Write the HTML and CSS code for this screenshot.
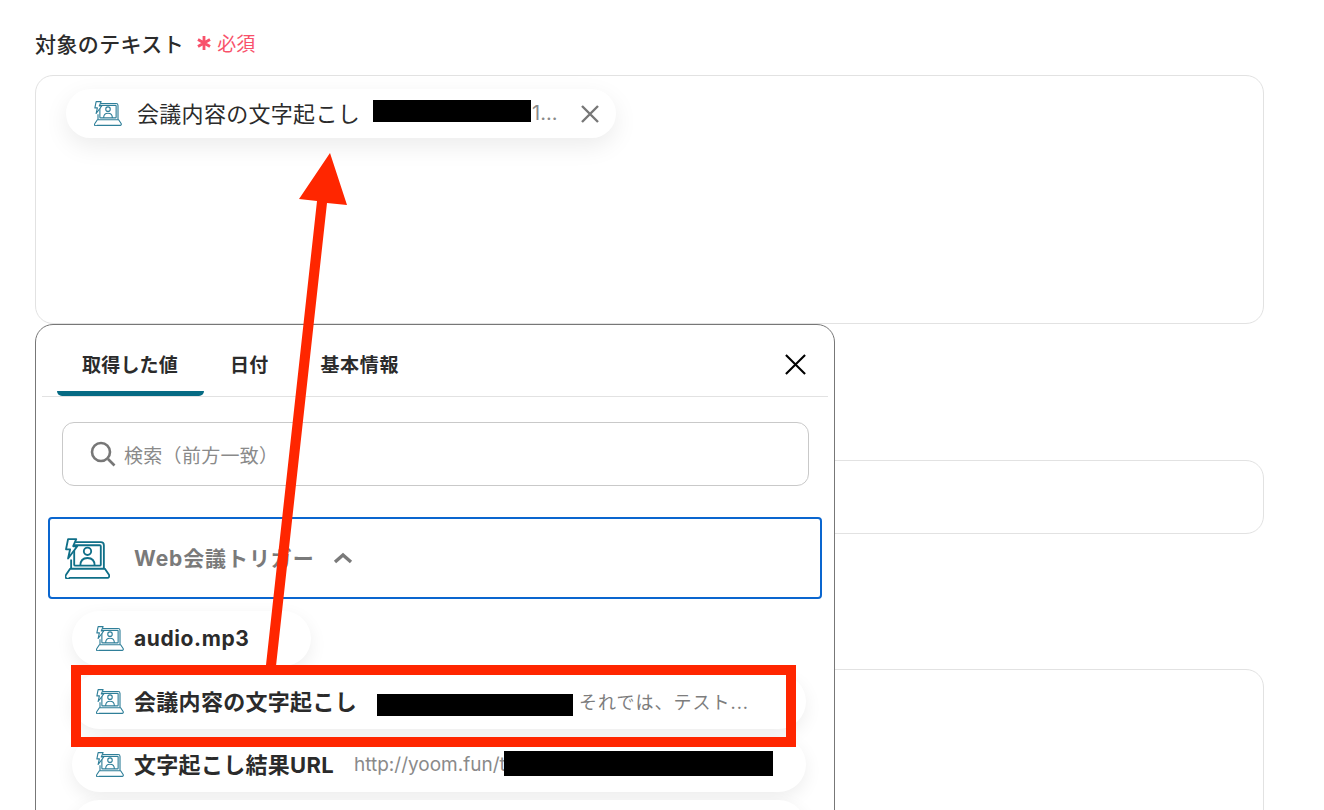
FILE: index.html
```html
<!DOCTYPE html>
<html lang="ja">

<head>
    <meta charset="UTF-8">
    <title>対象のテキスト</title>
    <link rel="stylesheet" href="styles.css">
</head>

<body>
    <svg class="defs" width="0" height="0">
        <symbol id="meet-icon" viewBox="0 0 44 40">
            <path d="M10 4h25a3 3 0 0 1 3 3v23M6 30V21" fill="none" stroke="currentColor" stroke-width="1.8" />
            <rect x="9" y="7" width="26" height="20" rx="1" fill="none" stroke="currentColor" stroke-width="1.8" />
            <path d="M3 1h8L8 8h4L3 20l2-9H1z" fill="#fff" stroke="currentColor" stroke-width="1.8" stroke-linejoin="round" />
            <circle cx="22" cy="13" r="3.6" fill="none" stroke="currentColor" stroke-width="1.8" />
            <path d="M15 27c0-5 3-7.500 7-7.500s7 2.500 7 7.500" fill="none" stroke="currentColor" stroke-width="1.8" />
            <path d="M5 30h34l4 6a2 2 0 0 1-1.500 3h-37A2 2 0 0 1 1 36z" fill="none" stroke="currentColor" stroke-width="1.8" stroke-linejoin="round" />
        </symbol>
    </svg>

    <div class="page">
        <div class="label">
            <span>対象のテキスト</span>
            <span class="required">
                <svg class="star" viewBox="0 0 16 16"><path d="M8 1v14M2 4.500l12 7M14 4.500l-12 7" /></svg>
                必須
            </span>
        </div>

        <div class="box box-main">
            <div class="tag">
                <svg class="icon"><use href="#meet-icon" /></svg>
                <span class="tag-name">会議内容の文字起こし</span>
                <span class="mask mask-tag"></span>
                <span class="tag-value">1...</span>
                <svg class="tag-close" viewBox="0 0 20 20"><path d="M2 2l16 16M18 2L2 18" /></svg>
            </div>
        </div>
        <div class="box box-second"></div>
        <div class="box box-third"></div>

        <div class="popup">
            <div class="tabs">
                <div class="tab active">取得した値</div>
                <div class="tab">日付</div>
                <div class="tab">基本情報</div>
                <svg class="popup-close" viewBox="0 0 24 24"><path d="M2 2l20 20M22 2L2 22" /></svg>
            </div>

            <div class="search">
                <svg viewBox="0 0 26 26"><circle cx="11" cy="11" r="9" /><path d="M18 18l6.500 6.500" /></svg>
                <span>検索（前方一致）</span>
            </div>

            <div class="group">
                <svg class="group-icon"><use href="#meet-icon" /></svg>
                <span class="group-name">Web会議トリガー</span>
                <svg class="chevron" viewBox="0 0 20 12"><path d="M2 10l8-7 8 7" /></svg>
            </div>

            <div class="chips">
                <div class="chip chip-short">
                    <svg class="icon"><use href="#meet-icon" /></svg>
                    <span class="chip-name">audio.mp3</span>
                </div>
                <div class="chip">
                    <svg class="icon"><use href="#meet-icon" /></svg>
                    <span class="chip-name">会議内容の文字起こし</span>
                    <span class="mask mask-chip"></span>
                    <span class="chip-value">それでは、テスト...</span>
                </div>
                <div class="chip">
                    <svg class="icon"><use href="#meet-icon" /></svg>
                    <span class="chip-name">文字起こし結果URL</span>
                    <span class="chip-url">http://yoom.fun/t</span>
                    <span class="mask mask-url"></span>
                </div>
                <div class="chip"></div>
            </div>
        </div>

        <svg class="marks" width="1324" height="810" viewBox="0 0 1324 810">
            <rect x="76" y="670" width="715" height="72" />
            <path class="arrow" d="M330 153L347 205 327 203 276 666 266 665 317 201 299 199z" />
        </svg>
    </div>
</body>

</html>
```

FILE: styles.css
```css
* {
    box-sizing: border-box;
}

html,
body {
    height: 100%;
    margin: 0;
    overflow: hidden;
}

body {
    font-family: Inter, "Noto Sans CJK JP", sans-serif;
    background: #fff;
    color: #2b2b2b;
}

.defs {
    position: absolute;
}

.page {
    position: relative;
    width: 1324px;
    height: 810px;
    padding: 30px 60px 0 35px;
    overflow: hidden;
}

.label {
    display: flex;
    align-items: center;
    gap: 12px;
    height: 28px;
    font-size: 21px;
    font-weight: 500;
    letter-spacing: 0.4px;
}

.label > span {
    margin-bottom: 3px;
}

.required {
    display: flex;
    align-items: center;
    gap: 5px;
    font-size: 19px;
    font-weight: 400;
    letter-spacing: 0;
    color: #f8516a;
}

.star {
    width: 16px;
    height: 16px;
    fill: none;
    stroke: #f8516a;
    stroke-width: 2.8;
}

.box {
    border: 1px solid #e2e2e2;
    border-radius: 18px;
    background: #fff;
}

.box-main {
    height: 249px;
    margin-top: 17px;
    padding: 13px 30px;
}

.box-second {
    height: 74px;
    margin-top: 136px;
}

.box-third {
    height: 300px;
    margin-top: 135px;
}

.tag {
    display: flex;
    align-items: center;
    width: 550px;
    height: 49px;
    padding: 0 16px 0 28px;
    border-radius: 25px;
    background: #fff;
    box-shadow: 0 8px 24px rgba(0, 0, 0, 0.08);
}

.icon {
    flex: none;
    width: 28px;
    height: 25px;
    color: #2f7f99;
}

.tag-name {
    margin: 0 0 4px 15px;
    font-size: 22px;
    letter-spacing: 0.3px;
    white-space: nowrap;
}

.mask {
    flex: none;
    display: block;
    background: #000;
}

.mask-tag {
    width: 158px;
    height: 22px;
    margin: 0 0 5px 13px;
}

.tag-value {
    margin: 0 0 2px 1px;
    font-size: 20px;
    color: #8a8a8a;
}

.tag-close {
    width: 20px;
    height: 20px;
    margin-left: auto;
    fill: none;
    stroke: #777;
    stroke-width: 2.4;
}

.popup {
    position: absolute;
    left: 35px;
    top: 324px;
    width: 800px;
    height: 520px;
    padding: 0 6px;
    border: 1px solid #777;
    border-radius: 18px;
    background: #fff;
}

.tabs {
    display: flex;
    align-items: flex-end;
    gap: 26px;
    height: 72px;
    border-bottom: 1px solid #e2e2e2;
    padding-left: 15px;
}

.tab {
    height: 70px;
    padding-top: 24px;
    font-size: 19px;
    font-weight: 700;
    letter-spacing: 0.2px;
    white-space: nowrap;
}

.tab:nth-child(3) {
    margin-left: 26px;
    letter-spacing: 0.7px;
}

.tab.active {
    border-bottom: 5px solid #066b84;
    border-radius: 0 0 5px 5px / 0 0 5px 5px;
    width: 147px;
    padding-left: 25px;
}

.popup-close {
    position: absolute;
    right: 27px;
    top: 28px;
    width: 23px;
    height: 23px;
    fill: none;
    stroke: #000;
    stroke-width: 2.2;
}

.search {
    display: flex;
    align-items: center;
    gap: 8px;
    height: 64px;
    margin: 25px 19px 0 20px;
    padding-left: 27px;
    border: 1px solid #c9c9c9;
    border-radius: 12px;
    font-size: 19px;
    letter-spacing: 0.3px;
    color: #8a8a8a;
}

.search span {
    margin-bottom: 0;
}

.search svg {
    width: 26px;
    height: 26px;
    fill: none;
    stroke: #777;
    stroke-width: 2.6;
}

.group {
    display: flex;
    align-items: center;
    height: 82px;
    margin: 31px 6px 0;
    padding-left: 15px;
    border: 2px solid #0a66cf;
    border-radius: 4px;
}

.group-icon {
    width: 45px;
    height: 41px;
    color: #0f6f88;
}

.group-name {
    margin: 0 0 2px 24px;
    font-size: 21px;
    font-weight: 700;
    letter-spacing: 0.9px;
    color: #7a7a7a;
}

.chevron {
    width: 20px;
    height: 12px;
    margin-left: 18px;
    fill: none;
    stroke: #7a7a7a;
    stroke-width: 3.4;
}

.chips {
    display: flex;
    flex-direction: column;
    gap: 8px;
    margin: 12px 22px 0 30px;
}

.chip {
    display: flex;
    align-items: center;
    flex: none;
    height: 55px;
    padding-left: 24px;
    border-radius: 28px;
    background: #fff;
    box-shadow: 0 6px 18px rgba(0, 0, 0, 0.07);
}

.chip-short {
    width: 239px;
}

.chip-name {
    margin: 0 0 4px 10px;
    font-size: 22px;
    font-weight: 700;
    letter-spacing: 0.3px;
    white-space: nowrap;
}

.chip-short .chip-name {
    margin-bottom: 0;
    font-size: 21px;
    letter-spacing: 0.6px;
}

.mask-chip {
    width: 196px;
    height: 22px;
    margin: 7px 0 0 20px;
}

.chip-value {
    margin: 0 0 2px 6px;
    font-size: 18px;
    letter-spacing: 1px;
    color: #7d7d7d;
}

.chip-url {
    margin: 0 -2px 0 20px;
    font-size: 19px;
    color: #8a8a8a;
    white-space: nowrap;
}

.mask-url {
    width: 269px;
    height: 25px;
    margin-bottom: 2px;
}

/* annotations drawn on top of the screenshot */
.marks {
    position: absolute;
    left: 0;
    top: 0;
    fill: none;
    stroke: #ff2600;
    stroke-width: 10;
    pointer-events: none;
}

.arrow {
    fill: #ff2600;
    stroke: none;
}
```
